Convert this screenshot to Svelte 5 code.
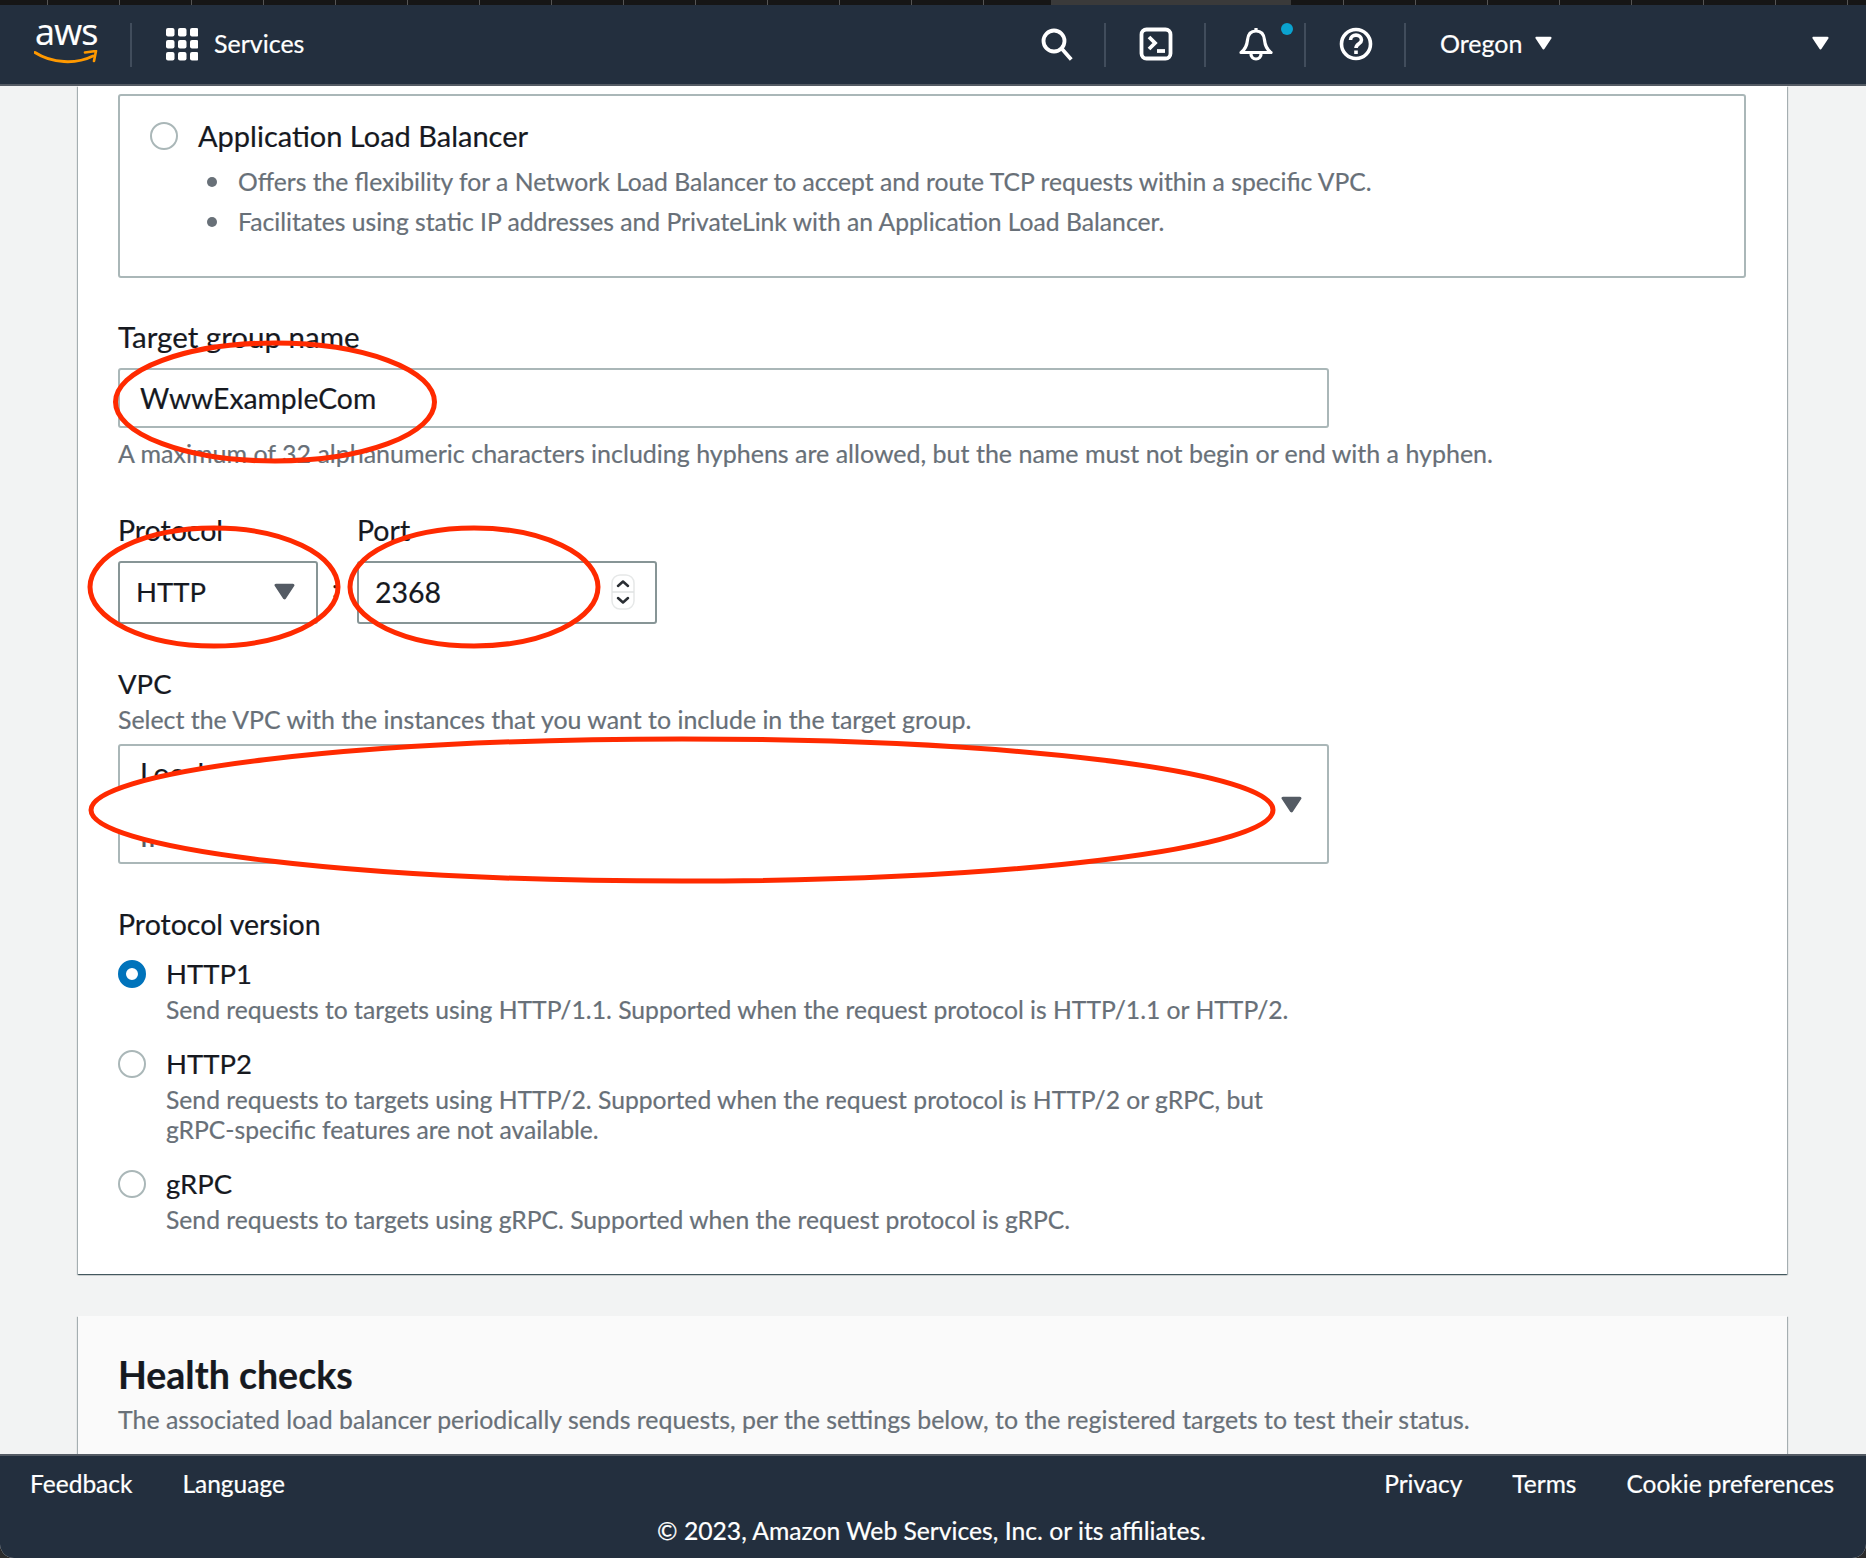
<script>
	const bullets = [
		'Offers the flexibility for a Network Load Balancer to accept and route TCP requests within a specific VPC.',
		'Facilitates using static IP addresses and PrivateLink with an Application Load Balancer.'
	];

	const versions = [
		{
			name: 'HTTP1',
			checked: true,
			lines: ['Send requests to targets using HTTP/1.1. Supported when the request protocol is HTTP/1.1 or HTTP/2.']
		},
		{
			name: 'HTTP2',
			checked: false,
			lines: [
				'Send requests to targets using HTTP/2. Supported when the request protocol is HTTP/2 or gRPC, but',
				'gRPC-specific features are not available.'
			]
		},
		{
			name: 'gRPC',
			checked: false,
			lines: ['Send requests to targets using gRPC. Supported when the request protocol is gRPC.']
		}
	];
</script>

{#snippet caret(width, height, color)}
	<svg class="caret" {width} {height} viewBox="0 0 20 16" aria-hidden="true">
		<path d="M2 2H18L10 14Z" fill={color} stroke={color} stroke-width="3" stroke-linejoin="round" />
	</svg>
{/snippet}

<div class="page">
	<div class="tabstrip">
		<span class="active-tab"></span>
	</div>

	<header>
		<div class="logo">
			<span class="logo-word">aws</span>
			<svg width="64" height="16" viewBox="0 0 64 16" aria-hidden="true">
				<path d="M1 2.5C18 13.5 42 14.5 59 6" fill="none" stroke="#f90" stroke-width="3" stroke-linecap="round" />
				<path d="M51 2.5 62 1 60 11" fill="none" stroke="#f90" stroke-width="2.6" stroke-linejoin="round" stroke-linecap="round" />
			</svg>
		</div>
		<div class="services">
			<svg width="32" height="33" viewBox="0 0 32 33" aria-hidden="true">
				{#each [0, 12, 24] as y}
					{#each [0, 12, 24] as x}
						<rect {x} {y} width="8.5" height="8.5" rx="2" fill="#fff" />
					{/each}
				{/each}
			</svg>
			<span>Services</span>
		</div>

		<div class="icons">
			<div class="cell">
				<svg width="34" height="34" viewBox="0 0 34 34" fill="none" stroke="#fff" stroke-width="3.8" aria-hidden="true">
					<circle cx="15" cy="14" r="10.5" />
					<path d="M23 22 31 31" stroke-linecap="square" />
				</svg>
			</div>
			<div class="cell">
				<svg width="34" height="34" viewBox="0 0 34 34" fill="none" stroke="#fff" stroke-width="3.8" aria-hidden="true">
					<rect x="2.5" y="2.5" width="29" height="29" rx="5" />
					<path d="M10 10 16 16 10 22" />
					<path d="M18 24H26" />
				</svg>
			</div>
			<div class="cell">
				<svg width="34" height="34" viewBox="0 0 34 34" fill="none" stroke="#fff" stroke-width="3.2" stroke-linejoin="round" aria-hidden="true">
					<path d="M2 25.5C7 22 8 18 8.5 13C9 7 12 4 17 4C22 4 25 7 25.5 13C26 18 27 22 32 25.5Z" />
					<path d="M17 1V4" />
					<path d="M12 26C11 34 23 34 22 26" />
				</svg>
				<span class="dot"></span>
			</div>
			<div class="cell">
				<svg width="34" height="34" viewBox="0 0 34 34" fill="none" stroke="#fff" stroke-width="3.6" aria-hidden="true">
					<circle cx="17" cy="17" r="14.5" />
					<path d="M11.5 13C11.5 6.5 22.5 6.5 22.5 13C22.5 17 17 16.5 17 21" />
					<path d="M17 23.5V27" />
				</svg>
			</div>
		</div>

		<div class="region">
			<span>Oregon</span>
			{@render caret(17, 14, '#fff')}
			<span class="end">{@render caret(17, 14, '#fff')}</span>
		</div>
	</header>

	<main>
		<section class="card">
			<div class="option">
				<div class="option-title">
					<span class="radio"></span>
					<span>Application Load Balancer</span>
				</div>
				<ul>
					{#each bullets as bullet}
						<li>{bullet}</li>
					{/each}
				</ul>
			</div>

			<p class="label name-label">Target group name</p>
			<div class="input name-input">WwwExampleCom</div>
			<p class="hint name-hint">A maximum of 32 alphanumeric characters including hyphens are allowed, but the name must not begin or end with a hyphen.</p>

			<div class="port-row">
				<div>
					<p class="label">Protocol</p>
					<div class="input protocol">
						<span>HTTP</span>
						{@render caret(21, 17, '#545b64')}
					</div>
				</div>
				<span class="colon">:</span>
				<div>
					<p class="label">Port</p>
					<div class="input port">
						<span>2368</span>
						<span class="spinner">
							<svg width="24" height="36" viewBox="0 0 24 36" fill="none" aria-hidden="true">
								<rect x="1" y="1" width="22" height="34" rx="8" fill="#fff" stroke="#e6e8e8" stroke-width="1.5" />
								<path d="M1 18H23" stroke="#dfe2e2" stroke-width="1.5" />
								<path d="M7 12 12 7.5 17 12M7 24 12 28.5 17 24" stroke="#2a2e33" stroke-width="2.5" stroke-linecap="round" stroke-linejoin="round" />
							</svg>
						</span>
					</div>
				</div>
			</div>

			<p class="label vpc-label">VPC</p>
			<p class="hint vpc-hint">Select the VPC with the instances that you want to include in the target group.</p>
			<div class="input vpc">
				<div class="vpc-text">
					<span>Local</span>
					<span class="vpc-sub">IPv4</span>
				</div>
				{@render caret(21, 17, '#545b64')}
			</div>

			<p class="label version-label">Protocol version</p>
			{#each versions as version}
				<div class="version">
					<div class="version-name">
						<span class="radio" class:checked={version.checked}></span>
						<span>{version.name}</span>
					</div>
					<div class="version-desc">
						{#each version.lines as line}
							<p class="hint">{line}</p>
						{/each}
					</div>
				</div>
			{/each}
		</section>

		<section class="card health">
			<h2>Health checks</h2>
			<p class="hint">The associated load balancer periodically sends requests, per the settings below, to the registered targets to test their status.</p>
		</section>
	</main>

	<footer>
		<div class="footer-links">
			<span>Feedback</span>
			<span>Language</span>
			<span class="push">Privacy</span>
			<span>Terms</span>
			<span>Cookie preferences</span>
		</div>
		<p class="copyright">© 2023, Amazon Web Services, Inc. or its affiliates.</p>
	</footer>

	<!-- red marker rings drawn on top of the form -->
	<svg class="marks" width="1866" height="1558" viewBox="0 0 1866 1558" fill="none" stroke="#ff2a00" stroke-width="5" aria-hidden="true">
		<ellipse cx="275" cy="402" rx="159.5" ry="59" />
		<ellipse cx="214" cy="587" rx="124" ry="59" />
		<ellipse cx="474" cy="587" rx="124" ry="59" />
		<ellipse cx="682" cy="810" rx="591" ry="71" fill="#fff" />
	</svg>
</div>

<style>
	:global(body) {
		margin: 0;
		background: #2b2b2b;
	}

	.page {
		position: relative;
		display: flex;
		flex-direction: column;
		width: 1866px;
		height: 1558px;
		overflow: hidden;
		background: #f2f3f3;
		color: #16191f;
		font-family: Lato, 'Liberation Sans', sans-serif;
		font-size: 25px;
		line-height: 30px;
		border-radius: 0 0 14px 14px;
		-webkit-text-stroke: 0.2px;
	}

	p {
		margin: 0;
	}

	.tabstrip {
		position: relative;
		flex: none;
		height: 5px;
		background: repeating-linear-gradient(90deg, #555 0 1px, #161616 1px 72px) 47px 0;
	}

	.active-tab {
		position: absolute;
		left: 1051px;
		width: 240px;
		height: 5px;
		background: #3a3a3a;
	}

	header {
		flex: none;
		display: flex;
		align-items: center;
		box-sizing: border-box;
		height: 81px;
		background: #232f3e;
		border-bottom: 2px solid #545b64;
		color: #fff;
	}

	.logo {
		display: flex;
		flex-direction: column;
		align-items: flex-start;
		box-sizing: border-box;
		width: 132px;
		height: 44px;
		padding-left: 34px;
		border-right: 2px solid #414d5c;
	}

	.logo-word {
		margin-top: -6px;
		padding-left: 1px;
		font-family: 'Open Sans', sans-serif;
		font-size: 36px;
		line-height: 30px;
		height: 29px;
		letter-spacing: -0.8px;
	}

	.logo svg {
		margin-top: 4px;
		flex: none;
	}

	.services {
		display: flex;
		align-items: center;
		gap: 16px;
		margin-left: 34px;
	}

	.services span {
		margin-bottom: 4px;
	}

	.icons {
		display: flex;
		margin-left: auto;
	}

	.cell {
		position: relative;
		display: flex;
		align-items: center;
		justify-content: center;
		box-sizing: border-box;
		width: 100px;
		height: 44px;
		padding-left: 2px;
		border-right: 2px solid #414d5c;
	}

	.cell svg {
		margin-bottom: 2px;
	}

	.dot {
		position: absolute;
		left: 75px;
		top: 0;
		width: 12px;
		height: 12px;
		border-radius: 50%;
		background: #0aa3d0;
	}

	.region {
		display: flex;
		align-items: center;
		gap: 13px;
		box-sizing: border-box;
		width: 460px;
		padding: 0 37px 4px 34px;
	}

	.caret {
		flex: none;
		display: block;
	}

	.end {
		margin-left: auto;
	}

	main {
		flex: 1;
		min-height: 0;
		overflow: hidden;
		padding: 0 79px 0 78px;
	}

	.card {
		padding: 8px 41px 39px 40px;
		background: #fff;
		box-shadow:
			0 1px 1px 0 rgba(0, 28, 36, 0.5),
			1px 1px 1px 0 rgba(0, 28, 36, 0.25),
			-1px 1px 1px 0 rgba(0, 28, 36, 0.25);
	}

	.option {
		box-sizing: border-box;
		height: 184px;
		padding: 23px 30px 0;
		border: 2px solid #aab7b8;
		border-radius: 3px;
	}

	.option-title {
		display: flex;
		align-items: center;
		gap: 20px;
		height: 34px;
		font-size: 29px;
	}

	.radio {
		flex: none;
		box-sizing: border-box;
		width: 28px;
		height: 28px;
		border: 2.5px solid #aab7b8;
		border-radius: 50%;
		background: #fff;
	}

	.radio.checked {
		border: 8px solid #0073bb;
	}

	ul {
		margin: 9px 0 0;
		padding: 0;
		list-style: none;
		color: #687078;
		font-size: 24.7px;
	}

	li {
		display: flex;
		align-items: center;
		gap: 21px;
		height: 40px;
		padding-left: 57px;
	}

	li::before {
		content: '';
		width: 10px;
		height: 10px;
		border-radius: 50%;
		background: #687078;
	}

	.label {
		color: #16191f;
		font-size: 28.5px;
	}

	.name-label {
		margin-top: 44px;
		font-size: 29.5px;
	}

	.input {
		display: flex;
		align-items: center;
		box-sizing: border-box;
		margin-top: 16px;
		border: 2px solid #aab7b8;
		border-radius: 3px;
		background: #fff;
	}

	.name-input {
		width: 1211px;
		height: 60px;
		padding-left: 20px;
		font-size: 28.3px;
	}

	.hint {
		color: #687078;
		font-size: 24.7px;
	}

	.name-hint {
		margin-top: 10px;
		font-size: 25px;
	}

	.port-row {
		display: flex;
		align-items: flex-start;
		margin-top: 47px;
	}

	.protocol {
		justify-content: space-between;
		width: 200px;
		height: 63px;
		padding: 0 21px 2px 16px;
		border-color: #879596;
		font-size: 27.5px;
	}

	.colon {
		width: 39px;
		padding-top: 58px;
		padding-left: 14px;
		box-sizing: border-box;
		color: #16191f;
	}

	.port {
		justify-content: space-between;
		width: 300px;
		height: 63px;
		padding: 0 20px 2px 16px;
		border-color: #879596;
		font-size: 28.5px;
	}

	.spinner {
		display: flex;
	}

	.vpc-label {
		margin-top: 45px;
		font-size: 27.5px;
	}

	.vpc-hint {
		margin-top: 5px;
		font-size: 24.9px;
	}

	.vpc {
		justify-content: space-between;
		width: 1211px;
		height: 120px;
		margin-top: 10px;
		padding: 0 25px 0 20px;
	}

	.vpc-text {
		display: flex;
		flex-direction: column;
		gap: 33px;
		font-size: 28.5px;
	}

	.vpc-sub {
		color: #545b64;
	}

	.version-label {
		margin-top: 45px;
	}

	.version {
		margin-top: 24px;
	}

	.version-label + .version {
		margin-top: 20px;
	}

	.version-name {
		display: flex;
		align-items: center;
		gap: 20px;
		font-size: 27.5px;
	}

	.version-desc {
		margin-top: 6px;
		padding-left: 48px;
	}

	.health {
		margin-top: 42px;
		padding-top: 37px;
		background: #fafafa;
	}

	.health .hint {
		font-size: 24.9px;
	}

	h2 {
		margin: 0 0 7px;
		font-size: 37.5px;
		line-height: 44px;
		font-weight: 700;
	}

	footer {
		flex: none;
		box-sizing: border-box;
		height: 104px;
		padding-top: 13px;
		background: #232f3e;
		border-top: 2px solid #545b64;
		color: #fff;
	}

	.footer-links {
		display: flex;
		gap: 50px;
		padding: 0 32px 0 30px;
		font-size: 24.5px;
	}

	.push {
		margin-left: auto;
	}

	.copyright {
		margin-top: 17px;
		padding-right: 3px;
		font-size: 24.7px;
		text-align: center;
	}

	.marks {
		position: absolute;
		top: 0;
		left: 0;
		pointer-events: none;
	}
</style>
